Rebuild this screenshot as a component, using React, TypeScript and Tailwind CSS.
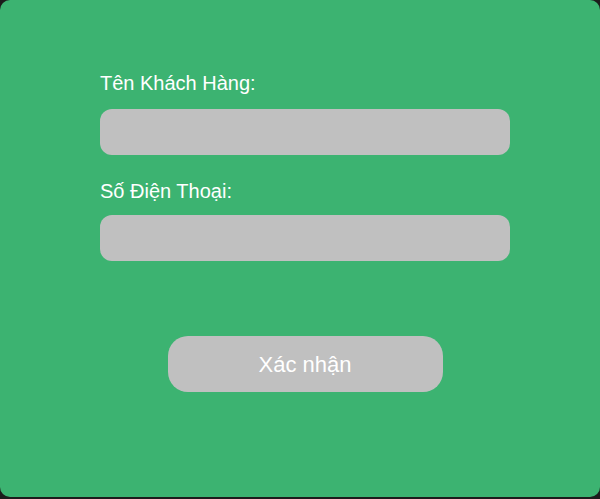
import React from 'react';

export default function App() {
  return (
    <div className="w-[600px] h-[499px] bg-[#1c1c1c]" style={{ fontFamily: '"Liberation Sans", Arial, sans-serif' }}>
      <div className="w-[600px] h-[497px] bg-[#3cb371] rounded-[10px] pl-[100px] pt-[72px]">
        <div className="w-[410px] flex flex-col">
          {/* Customer name */}
          <label className="block text-white text-[20px] leading-[23px]">Tên Khách Hàng:</label>
          <input type="text" className="mt-[14px] h-[46px] w-full rounded-[12px] bg-[#c0c0c0] outline-none" />

          {/* Phone */}
          <label className="block text-white text-[20px] leading-[23px] mt-[25px]">Số Điện Thoại:</label>
          <input type="text" className="mt-[12px] h-[46px] w-full rounded-[12px] bg-[#c0c0c0] outline-none" />

          <button className="mt-[75px] self-center w-[275px] h-[56px] rounded-[20px] bg-[#c0c0c0] text-white text-[22px]">
            Xác nhận
          </button>
        </div>
      </div>
    </div>
  );
}
